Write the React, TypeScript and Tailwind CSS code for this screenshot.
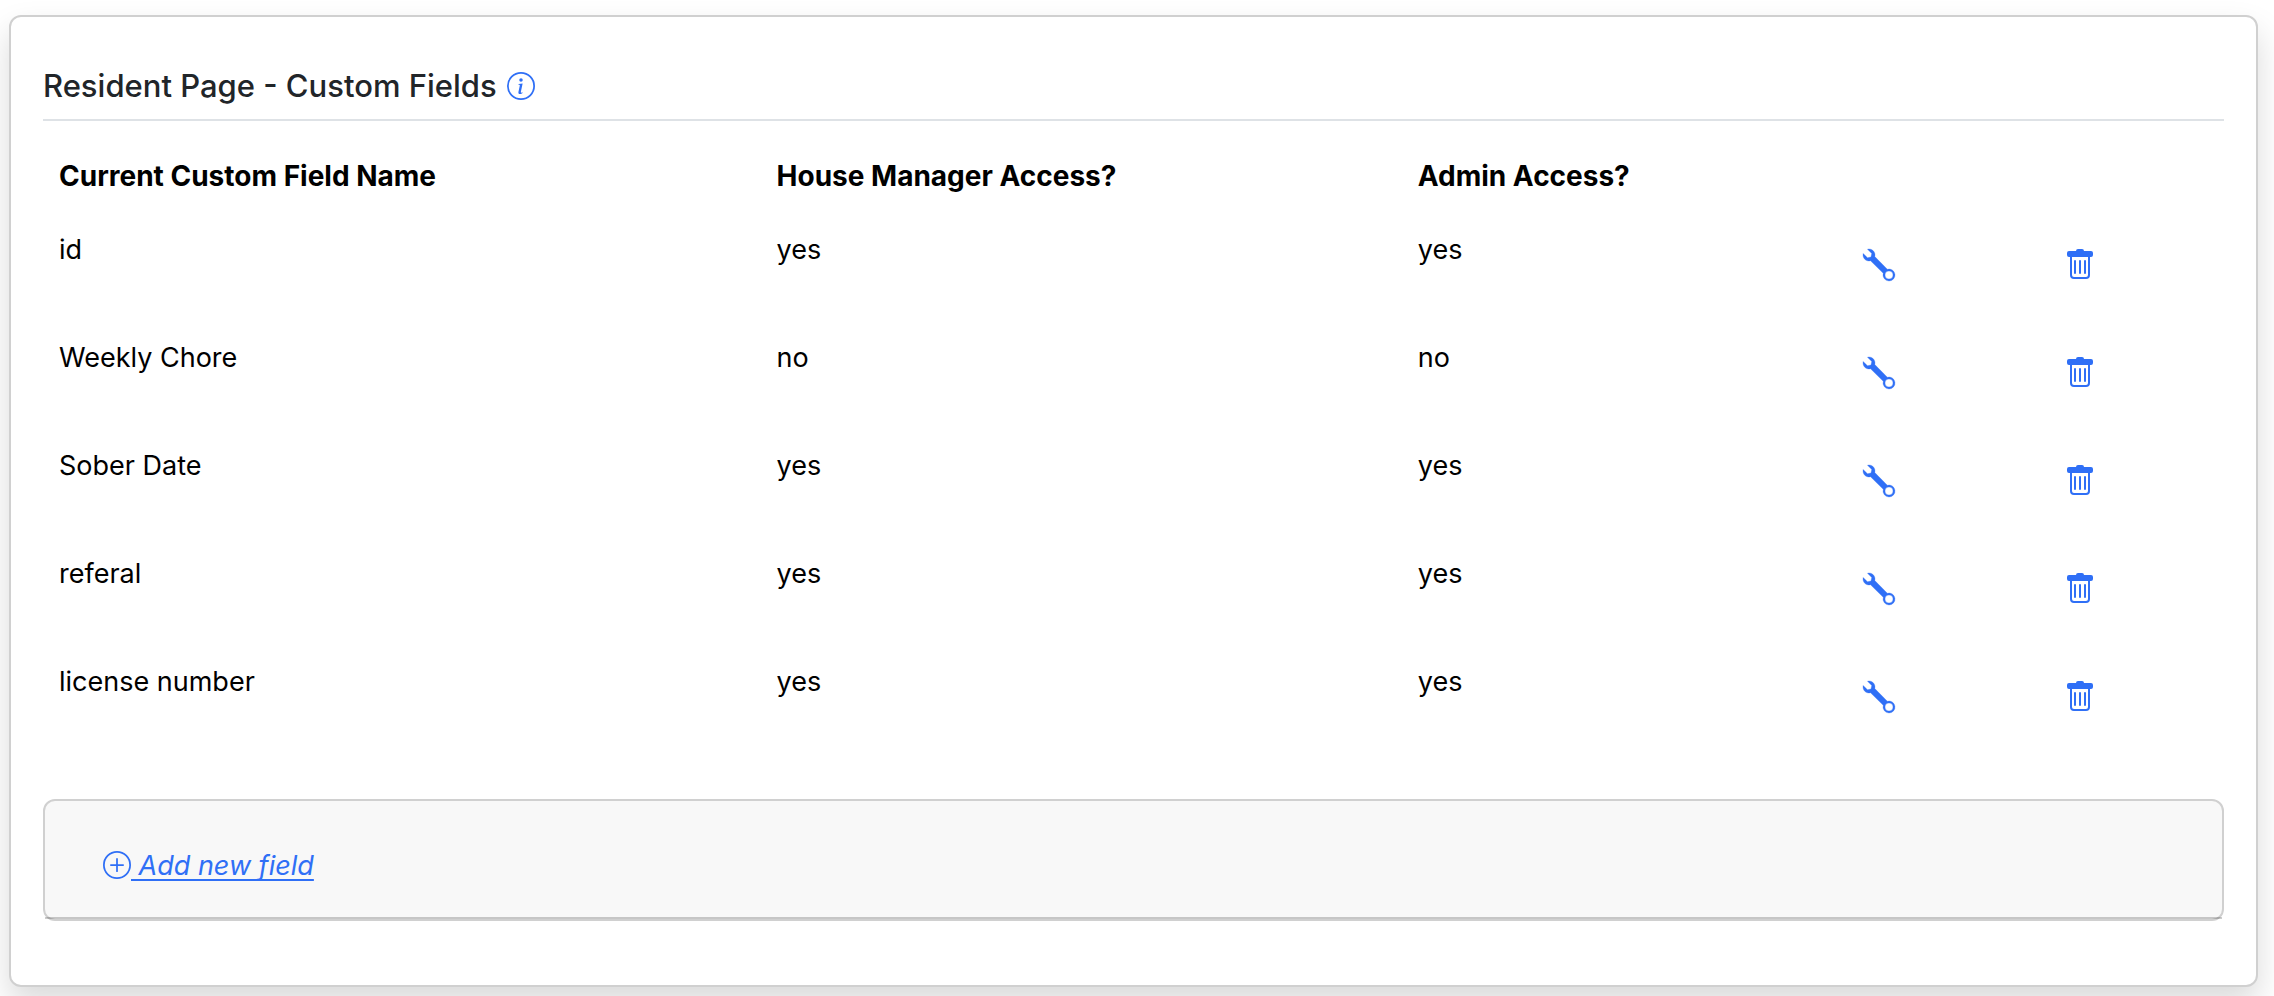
import { BsInfoCircle, BsPlusCircle } from "react-icons/bs";

const fields = [
  { name: "id", manager: "yes", admin: "yes" },
  { name: "Weekly Chore", manager: "no", admin: "no" },
  { name: "Sober Date", manager: "yes", admin: "yes" },
  { name: "referal", manager: "yes", admin: "yes" },
  { name: "license number", manager: "yes", admin: "yes" },
];

const WrenchIcon = () => (
  <svg viewBox="0 0 16 16" fill="currentColor" fillRule="evenodd" stroke="currentColor" strokeWidth="0.15" className="size-8 overflow-visible" aria-hidden="true">
    <path d="M.102 2.223A3.004 3.004 0 0 0 3.78 5.897l6.341 6.252A3.003 3.003 0 0 0 13 16a3 3 0 1 0-.851-5.878L5.897 3.781A3.004 3.004 0 0 0 2.223.1l2.141 2.142L4 4l-1.757.364L.102 2.223zM13 11a2 2 0 1 1 0 4 2 2 0 0 1 0-4z" />
  </svg>
);

const TrashIcon = () => (
  <svg viewBox="0 0 16 16" fill="currentColor" fillRule="evenodd" className="size-8" aria-hidden="true">
    <path d="M5.5 5.5A.5.5 0 0 1 6 6v6a.5.5 0 0 1-1 0V6a.5.5 0 0 1 .5-.5zm2.5 0a.5.5 0 0 1 .5.5v6a.5.5 0 0 1-1 0V6a.5.5 0 0 1 .5-.5zm3 .5a.5.5 0 0 0-1 0v6a.5.5 0 0 0 1 0V6z" />
    <path d="M14.5 3a1 1 0 0 1-1 1H13v9a2 2 0 0 1-2 2H5a2 2 0 0 1-2-2V4h-.5a1 1 0 0 1-1-1V2a1 1 0 0 1 1-1H6a1 1 0 0 1 1-1h2a1 1 0 0 1 1 1h3.5a1 1 0 0 1 1 1v1zM4.118 4 4 4.059V13a1 1 0 0 0 1 1h6a1 1 0 0 0 1-1V4.059L11.882 4H4.118z" />
  </svg>
);

const App = () => {
  return <>
    <div className="min-h-screen bg-white pt-[15px] pb-2 pl-[9px] pr-4 font-['Inter',sans-serif] text-[27px] leading-[42px] text-black">
      <div className="rounded-xl border-2 border-[#d0d0d0] bg-white px-8 pt-[50px] pb-16 shadow-[0_16px_32px_rgba(0,0,0,0.15)]">
        <div className="flex items-center gap-2.5 border-b-2 border-[#dee2e6] pb-[14px]">
          <h5 className="text-[31px] leading-[38px] font-medium text-[#212529]">Resident Page - Custom Fields</h5>
          <button type="button" aria-label="About custom fields" className="cursor-pointer text-[#2f6ff6]">
            <BsInfoCircle className="size-7" />
          </button>
        </div>
        <table className="mt-[18px] w-full table-fixed text-left">
          <thead className="text-[28px]">
            <tr>
              <th className="w-[32.9%] p-4 font-bold">Current Custom Field Name</th>
              <th className="w-[29.4%] p-4 font-bold">House Manager Access?</th>
              <th className="w-[20.4%] p-4 font-bold">Admin Access?</th>
              <th className="w-[9.25%] p-4"></th>
              <th className="w-[8.05%] p-4"></th>
            </tr>
          </thead>
          <tbody>
            {fields.map((field) => (
              <tr key={field.name} className="h-[108px] align-top">
                <td className="p-4">{field.name}</td>
                <td className="p-4">{field.manager}</td>
                <td className="p-4">{field.admin}</td>
                <td className="px-4 pt-9">
                  <button type="button" aria-label={`Edit ${field.name}`} className="block cursor-pointer text-[#2f6ff6]">
                    <WrenchIcon />
                  </button>
                </td>
                <td className="px-4 pt-9">
                  <button type="button" aria-label={`Delete ${field.name}`} className="block cursor-pointer text-[#2f6ff6]">
                    <TrashIcon />
                  </button>
                </td>
              </tr>
            ))}
          </tbody>
        </table>
        <div className="mt-[46px] rounded-xl border-2 border-[#d0d0d0] bg-[#f8f8f8]">
          <div className="border-b-2 border-black/20 px-[58px] pt-11 pb-[30px]">
            <a href="#" className="text-[#2f6ff6] italic underline decoration-2 underline-offset-4 [text-decoration-skip-ink:none]">
              <BsPlusCircle className="inline size-7 align-[-4px]" /> Add new field
            </a>
          </div>
        </div>
      </div>
    </div>
  </>
}
export default App;
